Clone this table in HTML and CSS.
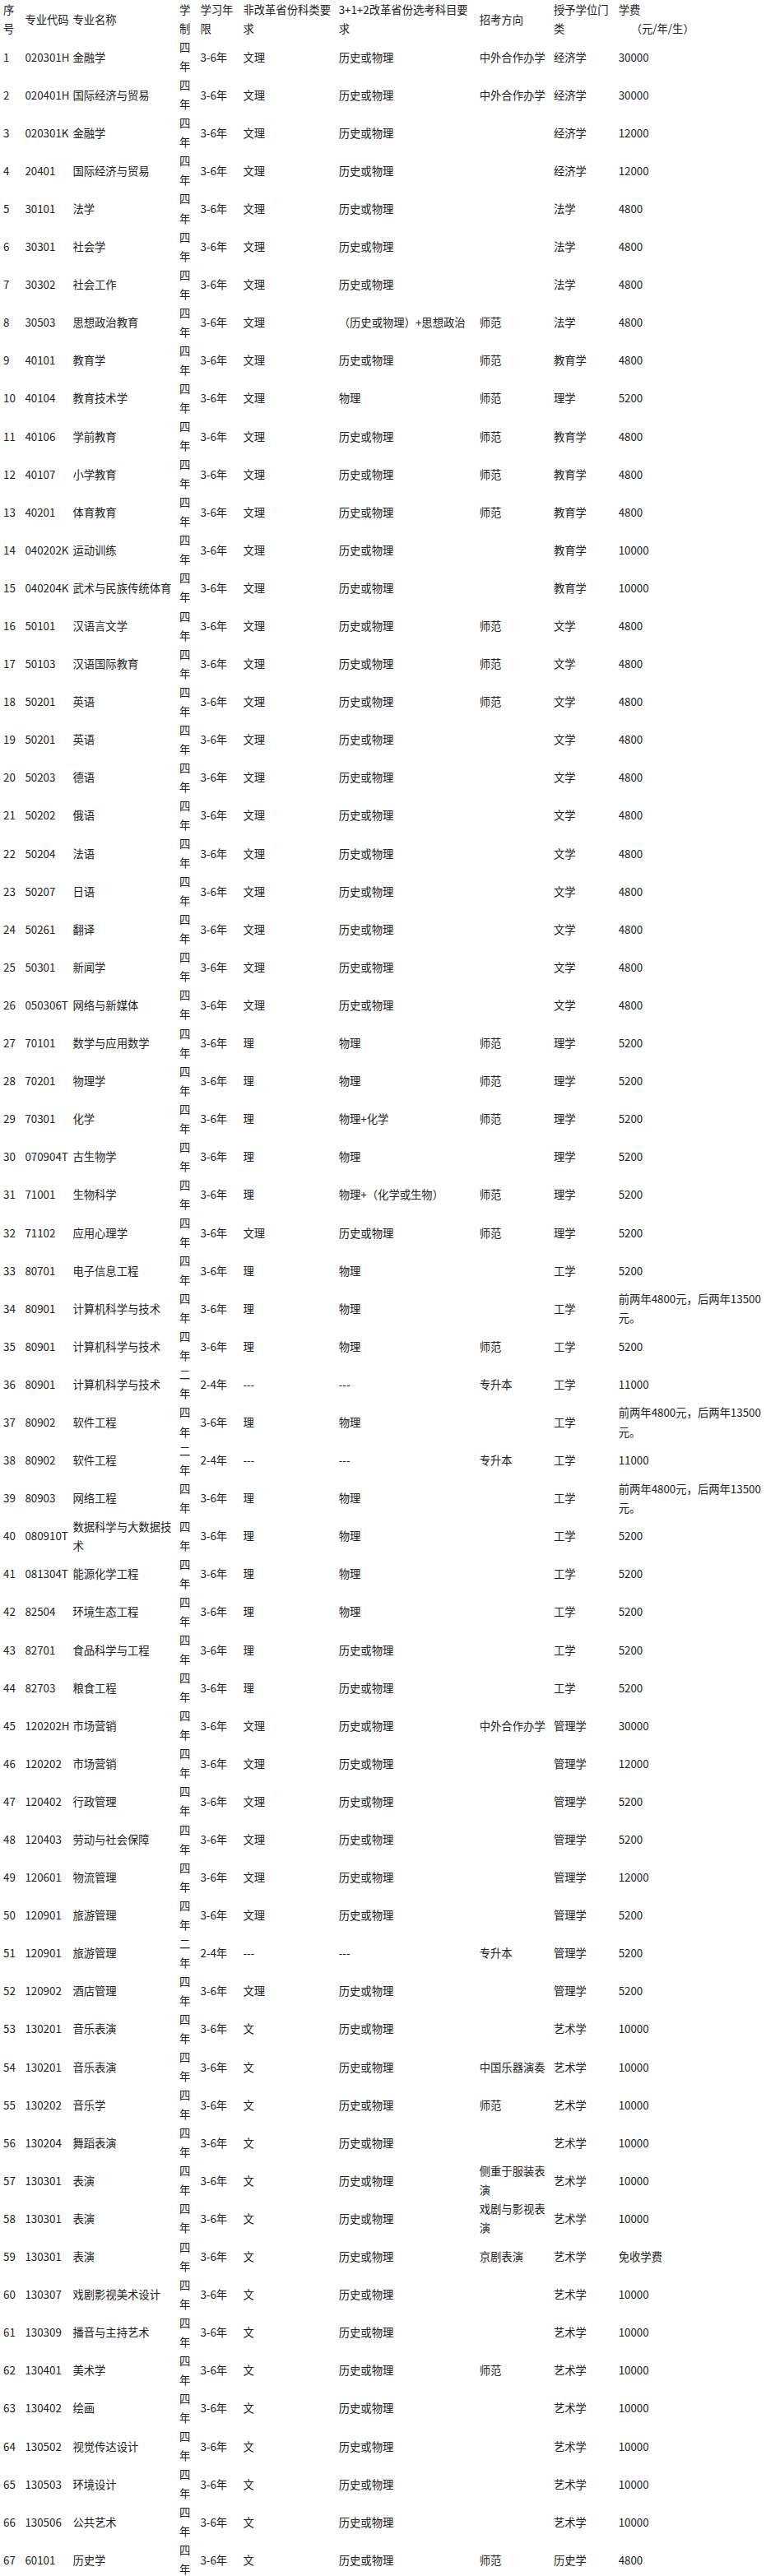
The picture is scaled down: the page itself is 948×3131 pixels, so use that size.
FILE: index.html
```html
<!DOCTYPE html>
<html lang="zh-CN">
<head>
<meta charset="utf-8">
<title>招生专业一览表</title>
<link rel="stylesheet" href="styles.css">
</head>
<body>
<div class="page">
<table class="majors">
<colgroup>
<col class="c-no"><col class="c-code"><col class="c-name"><col class="c-sys"><col class="c-years"><col class="c-cat"><col class="c-subj"><col class="c-dir"><col class="c-deg"><col class="c-fee">
</colgroup>
<thead>
<tr><th>序<br>号</th><th>专业代码</th><th>专业名称</th><th>学<br>制</th><th>学习年<br>限</th><th>非改革省份科类要<br>求</th><th>3+1+2改革省份选考科目要<br>求</th><th>招考方向</th><th>授予学位门<br>类</th><th>学费<br><span class="unit">（元/年/生）</span></th></tr>
</thead>
<tbody>
<tr><td>1</td><td>020301H</td><td>金融学</td><td>四年</td><td>3-6年</td><td>文理</td><td>历史或物理</td><td>中外合作办学</td><td>经济学</td><td>30000</td></tr>
<tr><td>2</td><td>020401H</td><td>国际经济与贸易</td><td>四年</td><td>3-6年</td><td>文理</td><td>历史或物理</td><td>中外合作办学</td><td>经济学</td><td>30000</td></tr>
<tr><td>3</td><td>020301K</td><td>金融学</td><td>四年</td><td>3-6年</td><td>文理</td><td>历史或物理</td><td></td><td>经济学</td><td>12000</td></tr>
<tr><td>4</td><td>20401</td><td>国际经济与贸易</td><td>四年</td><td>3-6年</td><td>文理</td><td>历史或物理</td><td></td><td>经济学</td><td>12000</td></tr>
<tr><td>5</td><td>30101</td><td>法学</td><td>四年</td><td>3-6年</td><td>文理</td><td>历史或物理</td><td></td><td>法学</td><td>4800</td></tr>
<tr><td>6</td><td>30301</td><td>社会学</td><td>四年</td><td>3-6年</td><td>文理</td><td>历史或物理</td><td></td><td>法学</td><td>4800</td></tr>
<tr><td>7</td><td>30302</td><td>社会工作</td><td>四年</td><td>3-6年</td><td>文理</td><td>历史或物理</td><td></td><td>法学</td><td>4800</td></tr>
<tr><td>8</td><td>30503</td><td>思想政治教育</td><td>四年</td><td>3-6年</td><td>文理</td><td>（历史或物理）+思想政治</td><td>师范</td><td>法学</td><td>4800</td></tr>
<tr><td>9</td><td>40101</td><td>教育学</td><td>四年</td><td>3-6年</td><td>文理</td><td>历史或物理</td><td>师范</td><td>教育学</td><td>4800</td></tr>
<tr><td>10</td><td>40104</td><td>教育技术学</td><td>四年</td><td>3-6年</td><td>文理</td><td>物理</td><td>师范</td><td>理学</td><td>5200</td></tr>
<tr><td>11</td><td>40106</td><td>学前教育</td><td>四年</td><td>3-6年</td><td>文理</td><td>历史或物理</td><td>师范</td><td>教育学</td><td>4800</td></tr>
<tr><td>12</td><td>40107</td><td>小学教育</td><td>四年</td><td>3-6年</td><td>文理</td><td>历史或物理</td><td>师范</td><td>教育学</td><td>4800</td></tr>
<tr><td>13</td><td>40201</td><td>体育教育</td><td>四年</td><td>3-6年</td><td>文理</td><td>历史或物理</td><td>师范</td><td>教育学</td><td>4800</td></tr>
<tr><td>14</td><td>040202K</td><td>运动训练</td><td>四年</td><td>3-6年</td><td>文理</td><td>历史或物理</td><td></td><td>教育学</td><td>10000</td></tr>
<tr><td>15</td><td>040204K</td><td>武术与民族传统体育</td><td>四年</td><td>3-6年</td><td>文理</td><td>历史或物理</td><td></td><td>教育学</td><td>10000</td></tr>
<tr><td>16</td><td>50101</td><td>汉语言文学</td><td>四年</td><td>3-6年</td><td>文理</td><td>历史或物理</td><td>师范</td><td>文学</td><td>4800</td></tr>
<tr><td>17</td><td>50103</td><td>汉语国际教育</td><td>四年</td><td>3-6年</td><td>文理</td><td>历史或物理</td><td>师范</td><td>文学</td><td>4800</td></tr>
<tr><td>18</td><td>50201</td><td>英语</td><td>四年</td><td>3-6年</td><td>文理</td><td>历史或物理</td><td>师范</td><td>文学</td><td>4800</td></tr>
<tr><td>19</td><td>50201</td><td>英语</td><td>四年</td><td>3-6年</td><td>文理</td><td>历史或物理</td><td></td><td>文学</td><td>4800</td></tr>
<tr><td>20</td><td>50203</td><td>德语</td><td>四年</td><td>3-6年</td><td>文理</td><td>历史或物理</td><td></td><td>文学</td><td>4800</td></tr>
<tr><td>21</td><td>50202</td><td>俄语</td><td>四年</td><td>3-6年</td><td>文理</td><td>历史或物理</td><td></td><td>文学</td><td>4800</td></tr>
<tr><td>22</td><td>50204</td><td>法语</td><td>四年</td><td>3-6年</td><td>文理</td><td>历史或物理</td><td></td><td>文学</td><td>4800</td></tr>
<tr><td>23</td><td>50207</td><td>日语</td><td>四年</td><td>3-6年</td><td>文理</td><td>历史或物理</td><td></td><td>文学</td><td>4800</td></tr>
<tr><td>24</td><td>50261</td><td>翻译</td><td>四年</td><td>3-6年</td><td>文理</td><td>历史或物理</td><td></td><td>文学</td><td>4800</td></tr>
<tr><td>25</td><td>50301</td><td>新闻学</td><td>四年</td><td>3-6年</td><td>文理</td><td>历史或物理</td><td></td><td>文学</td><td>4800</td></tr>
<tr><td>26</td><td>050306T</td><td>网络与新媒体</td><td>四年</td><td>3-6年</td><td>文理</td><td>历史或物理</td><td></td><td>文学</td><td>4800</td></tr>
<tr><td>27</td><td>70101</td><td>数学与应用数学</td><td>四年</td><td>3-6年</td><td>理</td><td>物理</td><td>师范</td><td>理学</td><td>5200</td></tr>
<tr><td>28</td><td>70201</td><td>物理学</td><td>四年</td><td>3-6年</td><td>理</td><td>物理</td><td>师范</td><td>理学</td><td>5200</td></tr>
<tr><td>29</td><td>70301</td><td>化学</td><td>四年</td><td>3-6年</td><td>理</td><td>物理+化学</td><td>师范</td><td>理学</td><td>5200</td></tr>
<tr><td>30</td><td>070904T</td><td>古生物学</td><td>四年</td><td>3-6年</td><td>理</td><td>物理</td><td></td><td>理学</td><td>5200</td></tr>
<tr><td>31</td><td>71001</td><td>生物科学</td><td>四年</td><td>3-6年</td><td>理</td><td>物理+（化学或生物）</td><td>师范</td><td>理学</td><td>5200</td></tr>
<tr><td>32</td><td>71102</td><td>应用心理学</td><td>四年</td><td>3-6年</td><td>文理</td><td>历史或物理</td><td>师范</td><td>理学</td><td>5200</td></tr>
<tr><td>33</td><td>80701</td><td>电子信息工程</td><td>四年</td><td>3-6年</td><td>理</td><td>物理</td><td></td><td>工学</td><td>5200</td></tr>
<tr><td>34</td><td>80901</td><td>计算机科学与技术</td><td>四年</td><td>3-6年</td><td>理</td><td>物理</td><td></td><td>工学</td><td>前两年4800元，后两年13500元。</td></tr>
<tr><td>35</td><td>80901</td><td>计算机科学与技术</td><td>四年</td><td>3-6年</td><td>理</td><td>物理</td><td>师范</td><td>工学</td><td>5200</td></tr>
<tr><td>36</td><td>80901</td><td>计算机科学与技术</td><td>二年</td><td>2-4年</td><td>---</td><td>---</td><td>专升本</td><td>工学</td><td>11000</td></tr>
<tr><td>37</td><td>80902</td><td>软件工程</td><td>四年</td><td>3-6年</td><td>理</td><td>物理</td><td></td><td>工学</td><td>前两年4800元，后两年13500元。</td></tr>
<tr><td>38</td><td>80902</td><td>软件工程</td><td>二年</td><td>2-4年</td><td>---</td><td>---</td><td>专升本</td><td>工学</td><td>11000</td></tr>
<tr><td>39</td><td>80903</td><td>网络工程</td><td>四年</td><td>3-6年</td><td>理</td><td>物理</td><td></td><td>工学</td><td>前两年4800元，后两年13500元。</td></tr>
<tr><td>40</td><td>080910T</td><td>数据科学与大数据技术</td><td>四年</td><td>3-6年</td><td>理</td><td>物理</td><td></td><td>工学</td><td>5200</td></tr>
<tr><td>41</td><td>081304T</td><td>能源化学工程</td><td>四年</td><td>3-6年</td><td>理</td><td>物理</td><td></td><td>工学</td><td>5200</td></tr>
<tr><td>42</td><td>82504</td><td>环境生态工程</td><td>四年</td><td>3-6年</td><td>理</td><td>物理</td><td></td><td>工学</td><td>5200</td></tr>
<tr><td>43</td><td>82701</td><td>食品科学与工程</td><td>四年</td><td>3-6年</td><td>理</td><td>历史或物理</td><td></td><td>工学</td><td>5200</td></tr>
<tr><td>44</td><td>82703</td><td>粮食工程</td><td>四年</td><td>3-6年</td><td>理</td><td>历史或物理</td><td></td><td>工学</td><td>5200</td></tr>
<tr><td>45</td><td>120202H</td><td>市场营销</td><td>四年</td><td>3-6年</td><td>文理</td><td>历史或物理</td><td>中外合作办学</td><td>管理学</td><td>30000</td></tr>
<tr><td>46</td><td>120202</td><td>市场营销</td><td>四年</td><td>3-6年</td><td>文理</td><td>历史或物理</td><td></td><td>管理学</td><td>12000</td></tr>
<tr><td>47</td><td>120402</td><td>行政管理</td><td>四年</td><td>3-6年</td><td>文理</td><td>历史或物理</td><td></td><td>管理学</td><td>5200</td></tr>
<tr><td>48</td><td>120403</td><td>劳动与社会保障</td><td>四年</td><td>3-6年</td><td>文理</td><td>历史或物理</td><td></td><td>管理学</td><td>5200</td></tr>
<tr><td>49</td><td>120601</td><td>物流管理</td><td>四年</td><td>3-6年</td><td>文理</td><td>历史或物理</td><td></td><td>管理学</td><td>12000</td></tr>
<tr><td>50</td><td>120901</td><td>旅游管理</td><td>四年</td><td>3-6年</td><td>文理</td><td>历史或物理</td><td></td><td>管理学</td><td>5200</td></tr>
<tr><td>51</td><td>120901</td><td>旅游管理</td><td>二年</td><td>2-4年</td><td>---</td><td>---</td><td>专升本</td><td>管理学</td><td>5200</td></tr>
<tr><td>52</td><td>120902</td><td>酒店管理</td><td>四年</td><td>3-6年</td><td>文理</td><td>历史或物理</td><td></td><td>管理学</td><td>5200</td></tr>
<tr><td>53</td><td>130201</td><td>音乐表演</td><td>四年</td><td>3-6年</td><td>文</td><td>历史或物理</td><td></td><td>艺术学</td><td>10000</td></tr>
<tr><td>54</td><td>130201</td><td>音乐表演</td><td>四年</td><td>3-6年</td><td>文</td><td>历史或物理</td><td>中国乐器演奏</td><td>艺术学</td><td>10000</td></tr>
<tr><td>55</td><td>130202</td><td>音乐学</td><td>四年</td><td>3-6年</td><td>文</td><td>历史或物理</td><td>师范</td><td>艺术学</td><td>10000</td></tr>
<tr><td>56</td><td>130204</td><td>舞蹈表演</td><td>四年</td><td>3-6年</td><td>文</td><td>历史或物理</td><td></td><td>艺术学</td><td>10000</td></tr>
<tr><td>57</td><td>130301</td><td>表演</td><td>四年</td><td>3-6年</td><td>文</td><td>历史或物理</td><td>侧重于服装表演</td><td>艺术学</td><td>10000</td></tr>
<tr><td>58</td><td>130301</td><td>表演</td><td>四年</td><td>3-6年</td><td>文</td><td>历史或物理</td><td>戏剧与影视表演</td><td>艺术学</td><td>10000</td></tr>
<tr><td>59</td><td>130301</td><td>表演</td><td>四年</td><td>3-6年</td><td>文</td><td>历史或物理</td><td>京剧表演</td><td>艺术学</td><td>免收学费</td></tr>
<tr><td>60</td><td>130307</td><td>戏剧影视美术设计</td><td>四年</td><td>3-6年</td><td>文</td><td>历史或物理</td><td></td><td>艺术学</td><td>10000</td></tr>
<tr><td>61</td><td>130309</td><td>播音与主持艺术</td><td>四年</td><td>3-6年</td><td>文</td><td>历史或物理</td><td></td><td>艺术学</td><td>10000</td></tr>
<tr><td>62</td><td>130401</td><td>美术学</td><td>四年</td><td>3-6年</td><td>文</td><td>历史或物理</td><td>师范</td><td>艺术学</td><td>10000</td></tr>
<tr><td>63</td><td>130402</td><td>绘画</td><td>四年</td><td>3-6年</td><td>文</td><td>历史或物理</td><td></td><td>艺术学</td><td>10000</td></tr>
<tr><td>64</td><td>130502</td><td>视觉传达设计</td><td>四年</td><td>3-6年</td><td>文</td><td>历史或物理</td><td></td><td>艺术学</td><td>10000</td></tr>
<tr><td>65</td><td>130503</td><td>环境设计</td><td>四年</td><td>3-6年</td><td>文</td><td>历史或物理</td><td></td><td>艺术学</td><td>10000</td></tr>
<tr><td>66</td><td>130506</td><td>公共艺术</td><td>四年</td><td>3-6年</td><td>文</td><td>历史或物理</td><td></td><td>艺术学</td><td>10000</td></tr>
<tr><td>67</td><td>60101</td><td>历史学</td><td>四年</td><td>3-6年</td><td>文</td><td>历史或物理</td><td>师范</td><td>历史学</td><td>4800</td></tr>
</tbody>
</table>
</div>
</body>
</html>
```
FILE: styles.css
```css
html, body {
  margin: 0;
  padding: 0;
  background: #ffffff;
}

.page {
  padding: 0 4px;
  font-family: "Noto Sans CJK SC", "Noto Sans", sans-serif;
  font-size: 13.33px;
  line-height: 23.05px;
  color: #222222;
}

.majors {
  border-collapse: collapse;
  table-layout: fixed;
  width: 940px;
}

.majors th,
.majors td {
  padding: 0;
  text-align: left;
  vertical-align: middle;
  font-weight: normal;
  word-break: normal;
}

.majors tr {
  height: 46.1px;
}

.c-no { width: 26.4px; }
.c-code { width: 58px; }
.c-name { width: 129.6px; }
.c-sys { width: 25.4px; }
.c-years { width: 52px; }
.c-cat { width: 116.3px; }
.c-subj { width: 171px; }
.c-dir { width: 90.3px; }
.c-deg { width: 78.7px; }
.c-fee { width: 192.3px; }

.unit {
  display: inline-block;
  padding-left: 15px;
}
```
